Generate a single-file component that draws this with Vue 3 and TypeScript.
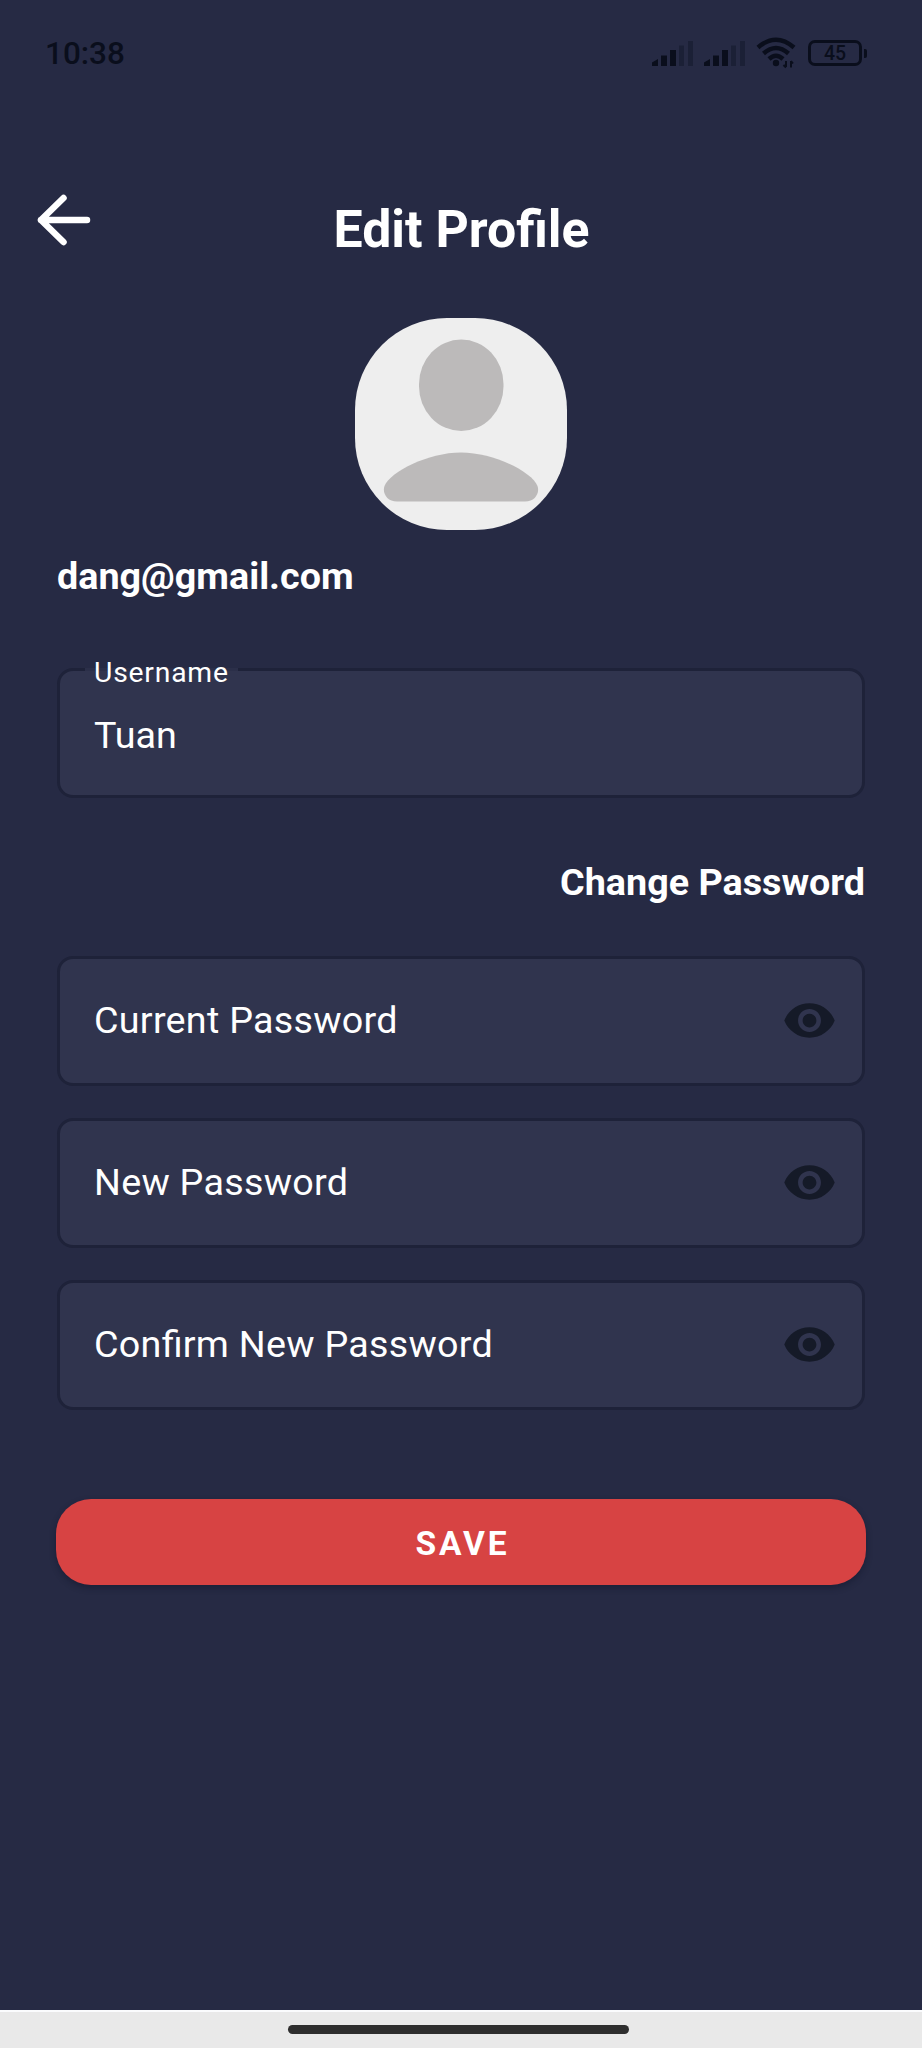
<script setup lang="ts">
interface PasswordField {
  id: string
  label: string
}

const email = 'dang@gmail.com'
const username = 'Tuan'
const batteryLevel = 45

const passwordFields: PasswordField[] = [
  { id: 'current', label: 'Current Password' },
  { id: 'new', label: 'New Password' },
  { id: 'confirm', label: 'Confirm New Password' },
]
</script>

<template>
  <div class="screen">
    <div class="status">
      <span class="clock">10:38</span>
      <div class="indicators">
        <svg v-for="n in 2" :key="n" class="signal" viewBox="0 0 42 26">
          <path d="M0 26V22.500L6 19V26Z" />
          <rect x="9" y="15.500" width="6" height="10.500" />
          <rect x="18" y="10" width="6" height="16" />
          <rect class="weak" x="27" y="5.500" width="5" height="20.500" />
          <rect class="weak" x="36" y="1" width="5" height="25" />
        </svg>
        <svg class="wifi" viewBox="0 0 40 32">
          <path class="arc" d="M2 10.500Q20 -5 38 10.500" />
          <path class="arc" d="M7.500 16.500Q20 5.500 32.500 16.500" />
          <path class="arc" d="M13 22Q20 15.500 27 22" />
          <circle cx="20" cy="26" r="3.200" />
          <path class="traffic" d="M30 24V30M27.500 28L30 30.500M35 30.500V24M35 24L37 26.500" />
        </svg>
        <div class="battery">
          <span class="battery-body">{{ batteryLevel }}</span>
          <span class="battery-tip"></span>
        </div>
      </div>
    </div>

    <header class="header">
      <button class="back" type="button" aria-label="Back">
        <svg viewBox="0 0 54 54">
          <path d="M50 27H4M26.500 5L4 27L26.500 49" />
        </svg>
      </button>
      <h1 class="title">Edit Profile</h1>
    </header>

    <main class="content">
      <div class="avatar">
        <svg viewBox="0 0 212 212">
          <rect x="64" y="21.500" width="84.500" height="91.500" rx="42.250" ry="44.500" />
          <path d="M42 183.500C32 183.500 27 175 29.500 168C35 154 73 134.500 106 134.500C139 134.500 177 154 182.500 168C185 175 180 183.500 170 183.500Z" />
        </svg>
      </div>
      <p class="email">{{ email }}</p>

      <div class="field username">
        <span class="floating">Username</span>
        <span class="value">{{ username }}</span>
      </div>

      <a class="change">Change Password</a>

      <div class="passwords">
        <div v-for="field in passwordFields" :key="field.id" class="field">
          <span class="label">{{ field.label }}</span>
          <svg class="eye" viewBox="0 0 24 24">
            <path d="M12 4.500C7 4.500 2.730 7.610 1 12c1.730 4.390 6 7.500 11 7.500s9.270-3.110 11-7.500c-1.730-4.390-6-7.500-11-7.500zM12 17c-2.760 0-5-2.240-5-5s2.240-5 5-5 5 2.240 5 5-2.240 5-5 5zm0-8c-1.660 0-3 1.340-3 3s1.340 3 3 3 3-1.340 3-3-1.340-3-3-3z" />
          </svg>
        </div>
      </div>

      <button class="save" type="button">SAVE</button>
    </main>

    <footer class="navbar"><span class="handle"></span></footer>
  </div>
</template>

<style>
html,
body {
  margin: 0;
  background: #262a44;
}
</style>

<style scoped>
.screen {
  box-sizing: border-box;
  display: flex;
  flex-direction: column;
  width: 922px;
  height: 2048px;
  overflow: hidden;
  background: #262a44;
  color: #fff;
  font-family: Roboto, "Liberation Sans", sans-serif;
}

.status {
  box-sizing: border-box;
  display: flex;
  justify-content: space-between;
  align-items: center;
  height: 106px;
  padding: 0 55px 0 45px;
  color: #0a0e1c;
}

.clock {
  padding-top: 1px;
  font-size: 31.500px;
  font-weight: 500;
  line-height: 36px;
}

.indicators {
  display: flex;
  align-items: center;
}

.signal {
  width: 42px;
  height: 26px;
  margin-right: 10px;
  fill: #0a0e1c;
}

.signal .weak {
  fill: #1b2036;
}

.wifi {
  width: 40px;
  height: 32px;
  margin: 0 12px 0 0;
  fill: #0a0e1c;
}

.arc {
  fill: none;
  stroke: #0a0e1c;
  stroke-width: 4.500;
}

.traffic {
  fill: none;
  stroke: #0a0e1c;
  stroke-width: 2;
}

.battery {
  display: flex;
  align-items: center;
  gap: 2px;
}

.battery-body {
  box-sizing: border-box;
  width: 54px;
  height: 26px;
  border: 3px solid #0a0e1c;
  border-radius: 7px;
  font-size: 19.500px;
  font-weight: 500;
  line-height: 21px;
  text-align: center;
}

.battery-tip {
  width: 3px;
  height: 9px;
  border-radius: 0 2px 2px 0;
  background: #0a0e1c;
}

.header {
  display: grid;
  grid-template-columns: 129px 1fr 129px;
  height: 212px;
}

.back {
  width: 54px;
  height: 54px;
  margin: 87px 0 0 37px;
  padding: 0;
  border: 0;
  background: none;
}

.back svg {
  display: block;
  width: 54px;
  height: 54px;
  fill: none;
  stroke: #fff;
  stroke-width: 6.500;
  stroke-linecap: round;
  stroke-linejoin: round;
}

.title {
  margin: 94px 0 0 1px;
  font-size: 51.800px;
  font-weight: 700;
  line-height: 60px;
  text-align: center;
}

.content {
  display: flex;
  flex: 1;
  flex-direction: column;
  padding: 0 57px;
}

.avatar {
  align-self: center;
  width: 212px;
  height: 212px;
  border-radius: 92px;
  overflow: hidden;
  background: #eee;
}

.avatar svg {
  display: block;
  fill: #bcbaba;
}

.email {
  margin: 24px 0 0;
  font-size: 37.700px;
  font-weight: 700;
  line-height: 44px;
}

.field {
  box-sizing: border-box;
  display: flex;
  justify-content: space-between;
  align-items: center;
  height: 130px;
  padding: 0 25px 0 34px;
  border: 3px solid #1e2239;
  border-radius: 16px;
  background: #30344e;
  font-size: 37.700px;
  line-height: 44px;
}

.username {
  position: relative;
  margin-top: 70px;
}

.floating {
  position: absolute;
  z-index: 1;
  top: -15px;
  left: 25px;
  padding: 0 9px;
  font-size: 28.300px;
  line-height: 34px;
  letter-spacing: 0.800px;
}

.floating::before {
  content: "";
  position: absolute;
  z-index: -1;
  top: 12px;
  right: 0;
  left: 0;
  height: 3px;
  background: #2b2f49;
}

.value {
  padding-top: 4px;
}

.change {
  align-self: flex-end;
  margin-top: 62px;
  font-size: 37.700px;
  font-weight: 700;
  line-height: 44px;
}

.passwords {
  display: grid;
  gap: 32px;
  margin-top: 52px;
}

.label {
  margin-bottom: 2px;
  letter-spacing: 0.270px;
  font-feature-settings: "liga" 1;
}

.eye {
  width: 55px;
  height: 55px;
  margin-bottom: 2px;
  fill: #151a28;
}

.save {
  height: 86px;
  margin: 89px -1px 0;
  padding: 3px 0 0 3px;
  border: 0;
  border-radius: 35px;
  background: #d74343;
  box-shadow: 0 3px 6px rgba(16, 20, 40, 0.450);
  color: #fff;
  font: 700 33.500px/40px Roboto, "Liberation Sans", sans-serif;
  letter-spacing: 2.900px;
}

.navbar {
  box-sizing: border-box;
  display: flex;
  justify-content: center;
  align-items: flex-start;
  height: 38px;
  padding-top: 13px;
  padding-right: 6px;
  border-top: 2px solid #fafbfd;
  background: #e9e9e9;
}

.handle {
  width: 341px;
  height: 9px;
  border-radius: 5px;
  background: #2e2e2e;
}
</style>
